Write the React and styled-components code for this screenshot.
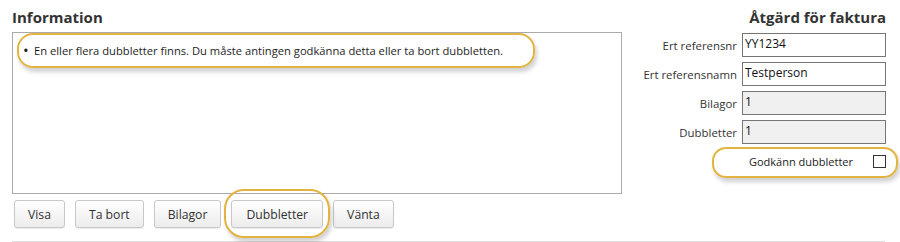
import styled, { createGlobalStyle } from "styled-components";

const GlobalStyle = createGlobalStyle`
    html, body {
        margin: 0;
        padding: 0;
        background: #fff;
    }
    body {
        font-family: "Open Sans", "Noto Sans", sans-serif;
        color: #1e1e1e;
    }
`

const Page = styled.div`
    position: relative;
    width: 900px;
    height: 242px;
    overflow: hidden;
`

const Columns = styled.div`
    display: flex;
    padding: 6px 14px 0 12px;
`

const LeftColumn = styled.section`
    width: 610px;
`

const RightColumn = styled.section`
    flex: 1;
    display: flex;
    flex-direction: column;
    align-items: flex-end;
`

const Heading = styled.h2`
    margin: 0;
    height: 26px;
    font-size: 15px;
    font-weight: 700;
    line-height: 22px;
    color: #333;
    text-align: ${props => props.$align || "left"};
`

const InfoBox = styled.div`
    height: 162px;
    border: 1px solid #ababab;
    box-sizing: border-box;
    padding: 10px 8px;
`

const MessageList = styled.ul`
    margin: 0;
    padding: 0 0 0 2px;
    list-style: none;
    font-size: 11.2px;
    line-height: 16px;
    li::before {
        content: "•";
        display: inline-block;
        width: 11px;
        font-size: 15px;
        line-height: 10px;
        vertical-align: -1px;
    }
`

const ButtonRow = styled.div`
    display: flex;
    gap: 10px;
    margin-top: 6px;
    padding-left: 2px;
`

const Button = styled.button`
    height: 28px;
    padding: 0 ${props => props.$pad || 13}px;
    font-family: inherit;
    font-size: 12.2px;
    color: #333;
    border: 1px solid #c8c8c8;
    border-radius: 3px;
    background: linear-gradient(#ffffff, #ececec);
    box-shadow: 0 1px 1px rgba(0, 0, 0, 0.08);
`

const Form = styled.div`
    display: grid;
    grid-template-columns: auto 144px;
    column-gap: 5px;
    row-gap: 5px;
    align-items: center;
    margin-top: 1px;
`

const Label = styled.label`
    font-size: 11.4px;
    text-align: right;
    color: #333;
`

const Input = styled.div`
    height: 24px;
    box-sizing: border-box;
    border: 1px solid #767676;
    background: ${props => (props.$disabled ? "#f0f0f0" : "#fff")};
    color: #111;
    font-size: 12px;
    line-height: 18px;
    padding: 1px 2px;
`

const CheckRow = styled.div`
    display: flex;
    align-items: center;
    gap: 20px;
    margin-top: 10px;
    font-size: 11px;
    color: #222;
`

const Checkbox = styled.span`
    width: 11px;
    height: 11px;
    border: 1px solid #333;
    background: #fff;
`

const Divider = styled.div`
    margin: 13px 15px 0 12px;
    border-top: 1px solid #dedede;
`

const Highlight = styled.div`
    position: absolute;
    left: ${props => props.$x}px;
    top: ${props => props.$y}px;
    width: ${props => props.$w}px;
    height: ${props => props.$h}px;
    border: 2px solid #e3b33f;
    border-radius: ${props => props.$r}px;
    box-shadow: 2px 4px 4px rgba(0, 0, 0, 0.18);
    pointer-events: none;
`

export default function App() {
    return (
        <>
            <GlobalStyle />
            <Page>
                <Columns>
                    <LeftColumn>
                        <Heading>Information</Heading>
                        <InfoBox>
                            <MessageList>
                                <li>En eller flera dubbletter finns. Du måste antingen godkänna detta eller ta bort dubbletten.</li>
                            </MessageList>
                        </InfoBox>
                        <ButtonRow>
                            <Button>Visa</Button>
                            <Button>Ta bort</Button>
                            <Button>Bilagor</Button>
                            <Button $pad={14}>Dubbletter</Button>
                            <Button>Vänta</Button>
                        </ButtonRow>
                    </LeftColumn>
                    <RightColumn>
                        <Heading $align="right">Åtgärd för faktura</Heading>
                        <Form>
                            <Label>Ert referensnr</Label>
                            <Input>YY1234</Input>
                            <Label>Ert referensnamn</Label>
                            <Input>Testperson</Input>
                            <Label>Bilagor</Label>
                            <Input $disabled>1</Input>
                            <Label>Dubbletter</Label>
                            <Input $disabled>1</Input>
                        </Form>
                        <CheckRow>
                            Godkänn dubbletter
                            <Checkbox />
                        </CheckRow>
                    </RightColumn>
                </Columns>
                <Divider />
                <Highlight $x={17} $y={33} $w={514} $h={31} $r={16} />
                <Highlight $x={224} $y={189} $w={102} $h={45} $r={20} />
                <Highlight $x={712} $y={147} $w={182} $h={27} $r={14} />
            </Page>
        </>
    )
}
